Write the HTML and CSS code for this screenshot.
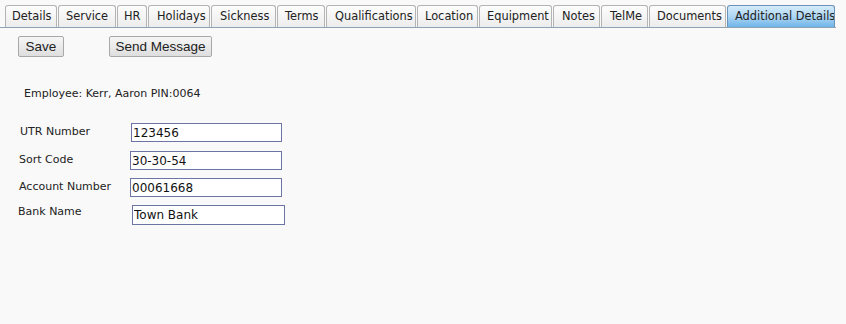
FILE: index.html
```html
<!DOCTYPE html>
<html lang="en">
<head>
    <meta charset="UTF-8">
    <title>Additional Details</title>
    <link rel="stylesheet" href="styles.css">
</head>
<body>
    <ul class="tabs">
        <li class="tab t-details">Details</li>
        <li class="tab t-service">Service</li>
        <li class="tab t-hr">HR</li>
        <li class="tab t-holidays">Holidays</li>
        <li class="tab t-sickness">Sickness</li>
        <li class="tab t-terms">Terms</li>
        <li class="tab t-qual">Qualifications</li>
        <li class="tab t-location">Location</li>
        <li class="tab t-equipment">Equipment</li>
        <li class="tab t-notes">Notes</li>
        <li class="tab t-telme">TelMe</li>
        <li class="tab t-documents">Documents</li>
        <li class="tab t-additional active">Additional Details</li>
    </ul>

    <div class="actions">
        <button class="btn btn-save">Save</button>
        <button class="btn btn-send">Send Message</button>
    </div>

    <p class="employee">Employee: Kerr, Aaron PIN:0064</p>

    <div class="fields">
        <div class="row row-utr">
            <label class="lbl">UTR Number</label>
            <input class="field" type="text" value="123456">
        </div>
        <div class="row row-sort">
            <label class="lbl">Sort Code</label>
            <input class="field" type="text" value="30-30-54">
        </div>
        <div class="row row-account">
            <label class="lbl">Account Number</label>
            <input class="field" type="text" value="00061668">
        </div>
        <div class="row row-bank">
            <label class="lbl">Bank Name</label>
            <input class="field field-bank" type="text" value="Town Bank">
        </div>
    </div>
</body>
</html>
```

FILE: styles.css
```css
body {
    margin: 0;
    background-color: #f9f9f9;
    font-family: "DejaVu Sans", Verdana, sans-serif;
    color: #222;
    height: 324px;
}
.tabs {
    list-style: none;
    margin: 0;
    padding: 5px 0 0 5px;
    width: 831px;
    display: flex;
    gap: 1px;
    border-bottom: 1px solid #8fa3b5;
}
.tab {
    box-sizing: border-box;
    height: 22px;
    padding: 0 0 0 6px;
    font-size: 11.4px;
    line-height: 21px;
    white-space: nowrap;
    overflow: hidden;
    color: #222;
    border: 1px solid #b4b4b4;
    border-bottom: none;
    border-radius: 3px 3px 0 0;
    background: linear-gradient(#fdfdfd, #ececec);
}
.tab.active {
    border-color: #6b93b8;
    background: linear-gradient(#d6ecfb, #a9d3f3 55%, #6db4e8);
}
.t-details { width: 52px; }
.t-service { width: 58px; padding-left: 7px; }
.t-hr { width: 30px; padding-left: 6px; }
.t-holidays { width: 62px; padding-left: 8px; }
.t-sickness { width: 65px; padding-left: 8px; }
.t-terms { width: 48px; padding-left: 7px; }
.t-qual { width: 90px; padding-left: 8px; }
.t-location { width: 61px; padding-left: 7px; }
.t-equipment { width: 73px; padding-left: 7px; }
.t-notes { width: 47px; padding-left: 8px; }
.t-telme { width: 47px; padding-left: 8px; }
.t-documents { width: 77px; padding-left: 7px; }
.t-additional { width: 108px; padding-left: 7px; }

.actions {
    display: flex;
    padding: 8px 0 0 18px;
}
.btn {
    box-sizing: border-box;
    height: 21px;
    font-family: "Liberation Sans", Arial, sans-serif;
    font-size: 13.5px;
    color: #222;
    padding: 0;
    border: 1px solid #a8a8a8;
    border-radius: 2px;
    background: linear-gradient(#f6f6f6, #dedede);
}
.btn-save { width: 46px; }
.btn-send { width: 103px; margin-left: 45px; }

.employee {
    margin: 30px 0 0 24px;
    font-size: 11px;
    line-height: 14px;
}
.fields {
    padding-top: 22px;
}
.row {
    display: flex;
    align-items: flex-start;
    height: 27px;
}
.lbl {
    font-size: 11px;
    line-height: 14px;
    width: 111px;
}
.field {
    box-sizing: border-box;
    width: 151px;
    height: 19px;
    margin: 0;
    padding: 0 1px;
    font-family: "DejaVu Sans", Verdana, sans-serif;
    font-size: 12px;
    color: #111;
    background: #fff;
    border: 1px solid #6d74a6;
}
.row-utr .lbl { padding: 2px 0 0 20px; }
.row-sort .lbl { padding: 3px 0 0 19px; }
.row-sort .field { margin-top: 1px; width: 152px; }
.row-account .lbl { padding: 3px 0 0 19px; }
.row-account .field { margin-top: 1px; width: 152px; }
.row-bank .lbl { padding: 1px 0 0 18px; }
.row-bank .field { margin: 1px 0 0 3px; width: 153px; height: 20px; }
```
